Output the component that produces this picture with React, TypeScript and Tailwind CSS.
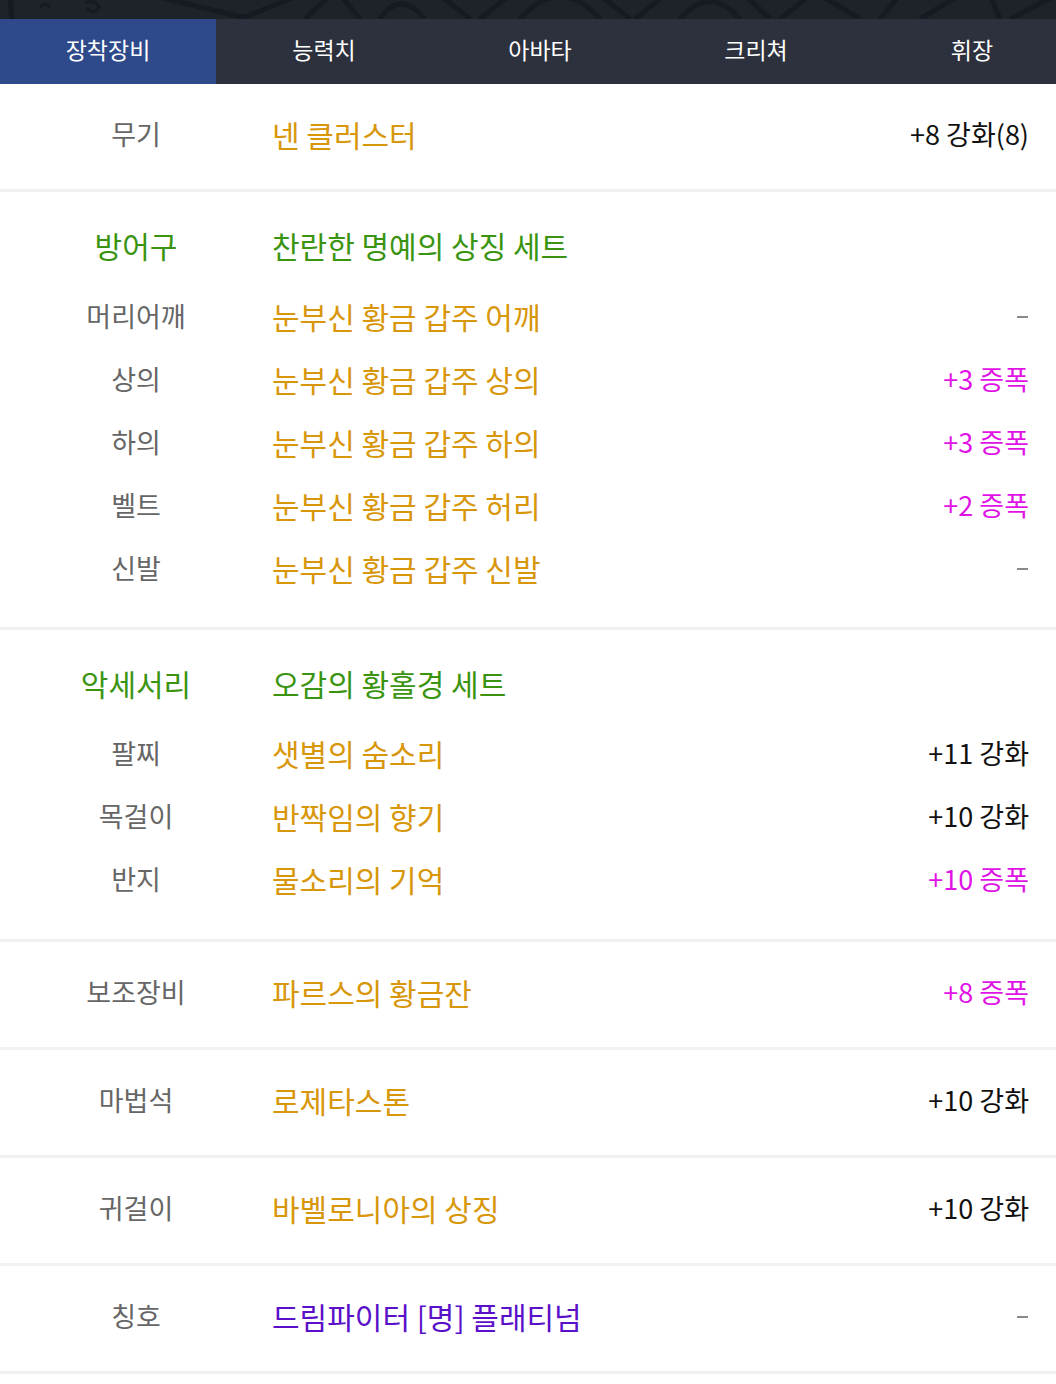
import React from "react";

const F = { fontFamily: '"Noto Sans CJK KR", "Noto Sans", sans-serif' };

type Row = { label: string; name: string; value?: string; kind?: "up" | "amp" | "none" };

function Value({ value, kind }: { value?: string; kind?: string }) {
  if (kind === "none" || !value) {
    return <span className="block w-[11px] h-[2px] bg-[#8a8a8a] mr-[1px]" />;
  }
  return (
    <span className={kind === "amp" ? "text-[#e013e6]" : "text-[#111]"}>{value}</span>
  );
}

function ItemRow({ r, h, nameColor }: { r: Row; h: string; nameColor: string }) {
  return (
    <div className={`flex items-center ${h}`}>
      <div className="w-[272px] text-center text-[27px] text-[#666666]">{r.label}</div>
      <div className={`flex-1 text-[30px] ${nameColor}`}>{r.name}</div>
      <div className="pr-[27px] text-[27px] flex items-center">
        <Value value={r.value} kind={r.kind} />
      </div>
    </div>
  );
}

function TitleRow({ label, name }: { label: string; name: string }) {
  return (
    <div className="flex items-center h-[63px] text-[#3a9410]">
      <div className="w-[272px] text-center text-[30px]">{label}</div>
      <div className="flex-1 text-[30px]">{name}</div>
    </div>
  );
}

function Single({ r, nameColor = "text-[#d8960a]" }: { r: Row; nameColor?: string }) {
  return (
    <div className="border-b-[3px] border-[#f1f1f1]">
      <ItemRow r={r} h="h-[105px] pb-[4px]" nameColor={nameColor} />
    </div>
  );
}

export default function App() {
  const tabs = ["장착장비", "능력치", "아바타", "크리쳐", "휘장"];
  const armor: Row[] = [
    { label: "머리어깨", name: "눈부신 황금 갑주 어깨", kind: "none" },
    { label: "상의", name: "눈부신 황금 갑주 상의", value: "+3 증폭", kind: "amp" },
    { label: "하의", name: "눈부신 황금 갑주 하의", value: "+3 증폭", kind: "amp" },
    { label: "벨트", name: "눈부신 황금 갑주 허리", value: "+2 증폭", kind: "amp" },
    { label: "신발", name: "눈부신 황금 갑주 신발", kind: "none" },
  ];
  const acc: Row[] = [
    { label: "팔찌", name: "샛별의 숨소리", value: "+11 강화", kind: "up" },
    { label: "목걸이", name: "반짝임의 향기", value: "+10 강화", kind: "up" },
    { label: "반지", name: "물소리의 기억", value: "+10 증폭", kind: "amp" },
  ];
  return (
    <div className="w-[1056px] bg-white overflow-hidden" style={F}>
      <div className="h-[19px] bg-[#1e2229] overflow-hidden">
        <svg width="1056" height="19" viewBox="0 0 1056 19" fill="none" stroke="#161a22" strokeWidth="5">
          <path d="M10 -5 L12 19" />
          <path d="M40 8 q6 -8 10 0" strokeWidth="3" />
          <path d="M85 3 q10 -4 14 4 q-4 8 -12 2" strokeWidth="3" />
          <path d="M150 -5 L250 19" />
          <path d="M240 19 L300 -5" />
          <path d="M305 19 L330 -5" />
          <path d="M340 -5 L360 19" />
          <path d="M380 19 q20 -30 45 0" />
          <path d="M440 -5 L470 19" />
          <path d="M480 19 L510 -5" />
          <path d="M520 19 q40 -45 80 0" />
          <path d="M600 -5 L630 19" />
          <path d="M635 19 L665 -5" />
          <path d="M680 19 q30 -35 60 0" />
          <path d="M745 -5 L770 19" />
          <path d="M780 19 L810 -5" />
          <path d="M820 -5 L860 19" />
          <path d="M880 19 L900 -5" />
          <path d="M920 19 L960 -5" />
          <path d="M990 -5 L1000 19" />
          <path d="M1010 19 L1056 -5" />
        </svg>
      </div>
      <div className="flex h-[65px] bg-[#2c313d] text-white text-[23px] overflow-hidden">
        {tabs.map((t, i) => (
          <div
            key={t}
            className={`flex shrink-0 w-[216px] items-center justify-center pb-[5px] ${i === 0 ? "bg-[#2e4a8b]" : ""}`}
          >
            {t}
          </div>
        ))}
      </div>

      <Single r={{ label: "무기", name: "넨 클러스터", value: "+8 강화(8)", kind: "up" }} />

      <div className="border-b-[3px] border-[#f1f1f1] pt-[22px] pb-[27px]">
        <TitleRow label="방어구" name="찬란한 명예의 상징 세트" />
        <div className="h-[8px]" />
        {armor.map((r) => (
          <ItemRow key={r.label} r={r} h="h-[63px]" nameColor="text-[#d8960a]" />
        ))}
      </div>

      <div className="border-b-[3px] border-[#f1f1f1] pt-[22px] pb-[28px]">
        <TitleRow label="악세서리" name="오감의 황홀경 세트" />
        <div className="h-[7px]" />
        {acc.map((r) => (
          <ItemRow key={r.label} r={r} h="h-[63px]" nameColor="text-[#d8960a]" />
        ))}
      </div>

      <Single r={{ label: "보조장비", name: "파르스의 황금잔", value: "+8 증폭", kind: "amp" }} />
      <Single r={{ label: "마법석", name: "로제타스톤", value: "+10 강화", kind: "up" }} />
      <Single r={{ label: "귀걸이", name: "바벨로니아의 상징", value: "+10 강화", kind: "up" }} />
      <Single r={{ label: "칭호", name: "드림파이터 [명] 플래티넘", kind: "none" }} nameColor="text-[#5a10c8]" />
      <div className="h-[12px]" />
    </div>
  );
}
